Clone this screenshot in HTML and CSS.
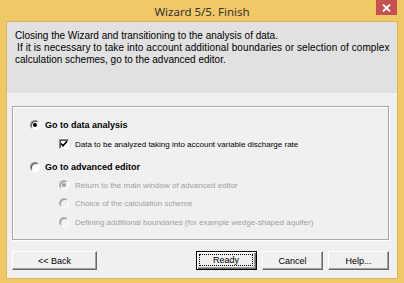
FILE: index.html
```html
<!DOCTYPE html>
<html>
<head>
<meta charset="utf-8">
<link rel="stylesheet" href="styles.css">
</head>
<body>
<div class="window">
  <div class="titlebar">
    <span class="tb-side"></span>
    <div class="title">Wizard 5/5. Finish</div>
    <div class="tb-side tb-right">
      <div class="close">
        <svg width="9" height="8" viewBox="0 0 9 8"><path d="M1 0.5 L8 7.5 M8 0.5 L1 7.5" stroke="#fff" stroke-width="1.8" fill="none"/></svg>
      </div>
    </div>
  </div>
  <div class="client">
    <div class="header">
      <p>Closing the Wizard and transitioning to the analysis of data.</p>
      <p class="indent">If it is necessary to take into account additional boundaries or selection of complex</p>
      <p>calculation schemes, go to the advanced editor.</p>
    </div>
    <div class="group">
      <div class="row row-main r1"><span class="radio checked"></span><span class="label bold">Go to data analysis</span></div>
      <div class="row row-sub r2"><span class="check"><svg width="8" height="8" viewBox="0 0 8 8"><path d="M1 3.5 L3 5.8 L7 1.2" stroke="#000" stroke-width="1.6" fill="none"/></svg></span><span class="label">Data to be analyzed taking into account variable discharge rate</span></div>
      <div class="row row-main r3"><span class="radio"></span><span class="label bold">Go to advanced editor</span></div>
      <div class="row row-sub r4 disabled"><span class="radio checked"></span><span class="label">Return to the main window of advanced editor</span></div>
      <div class="row row-sub r5 disabled"><span class="radio"></span><span class="label">Choice of the calculation scheme</span></div>
      <div class="row row-sub r6 disabled"><span class="radio"></span><span class="label">Defining additional boundaries (for example wedge-shaped aquifer)</span></div>
    </div>
    <div class="buttons">
      <button class="btn back">&lt;&lt; Back</button>
      <span class="spacer"></span>
      <button class="btn default"><span class="focus">Ready</span></button>
      <button class="btn">Cancel</button>
      <button class="btn">Help...</button>
    </div>
  </div>
</div>
</body>
</html>
```

FILE: styles.css
```css
* { box-sizing: border-box; }
html, body { margin: 0; padding: 0; }
body {
  width: 404px;
  height: 283px;
  overflow: hidden;
  font-family: "Liberation Sans", Arial, sans-serif;
}
.window {
  width: 404px;
  height: 283px;
  background: #f0c865;
  padding: 0 7px 5px 7px;
  display: flex;
  flex-direction: column;
}
.titlebar {
  height: 22px;
  flex: none;
  display: grid;
  grid-template-columns: 1fr auto 1fr;
  margin: 0 -7px 0 -7px;
}
.title {
  font-family: "Noto Sans", "Open Sans", sans-serif;
  font-size: 11.5px;
  color: #333;
  line-height: 22px;
  padding-top: 1px;
}
.tb-right {
  display: flex;
  justify-content: flex-end;
  align-items: flex-start;
  padding-right: 7px;
}
.close {
  width: 21px;
  height: 15px;
  background: #c75050;
  display: flex;
  align-items: center;
  justify-content: center;
}
.client {
  flex: 1;
  background: #f0f0f0;
  display: flex;
  flex-direction: column;
  outline: 1px solid #d9b45c;
}
.header {
  height: 71px;
  flex: none;
  background: #e1e1e1;
  padding: 8px 0 0 8px;
  font-size: 10px;
  color: #000;
}
.header p {
  margin: 0;
  line-height: 12px;
  white-space: nowrap;
}
.header p.indent { padding-left: 2px; letter-spacing: 0.1px; }
.group {
  margin: 13px 8px 0 5px;
  height: 134px;
  flex: none;
  border: 1px solid #a8a8a8;
  box-shadow: inset 1px 1px 0 #fff, 1px 1px 0 #fff;
  padding: 11px 0 0 0;
  display: flex;
  flex-direction: column;
  font-size: 8px;
}
.row {
  height: 14px;
  display: flex;
  align-items: center;
  white-space: nowrap;
}
.row-main { padding-left: 17px; }
.row-sub { padding-left: 46px; }
.r2 { margin-top: 5px; }
.r3 { margin-top: 9px; }
.r4 { margin-top: 4px; }
.r5 { margin-top: 4px; }
.r6 { margin-top: 5px; }
.label { margin-left: 5px; color: #000; }
.row-sub .label { margin-left: 6px; }
.bold { font-weight: bold; font-size: 9px; }
.radio {
  width: 10px;
  height: 10px;
  border-radius: 50%;
  background: #fff;
  border: 1px solid;
  border-color: #8a8a8a #ffffff #ffffff #8a8a8a;
  box-shadow: inset 1px 1px 0 #555;
  display: flex;
  align-items: center;
  justify-content: center;
  flex: none;
}
.radio.checked::after {
  content: "";
  width: 4px;
  height: 4px;
  border-radius: 50%;
  background: #000;
}
.disabled .radio {
  background: #f0f0f0;
  border-color: #b4b4b4 #ffffff #ffffff #b4b4b4;
  box-shadow: inset 1px 1px 0 #9a9a9a;
}
.disabled .radio.checked::after { background: #a0a0a0; }
.disabled .label { color: #a0a0a0; }
.check {
  width: 10px;
  height: 10px;
  background: #fff;
  border: 1px solid;
  border-color: #8a8a8a #ffffff #ffffff #8a8a8a;
  box-shadow: inset 1px 1px 0 #555;
  display: flex;
  align-items: center;
  justify-content: center;
  flex: none;
  overflow: hidden;
}
.check svg { flex: none; display: block; }
.buttons {
  display: flex;
  margin: 11px 8px 0 5px;
  gap: 5px;
}
.spacer { flex: 1; }
.btn {
  height: 19px;
  width: 61px;
  padding: 0;
  margin: 0;
  font-family: "Liberation Sans", Arial, sans-serif;
  font-size: 9px;
  color: #000;
  background: #f0f0f0;
  border: 1px solid;
  border-color: #ffffff #696969 #696969 #ffffff;
  box-shadow: inset -1px -1px 0 #a0a0a0;
  display: flex;
  align-items: center;
  justify-content: center;
}
.btn.back { width: 85px; }
.btn.default {
  border-color: #000;
  box-shadow: inset 1px 1px 0 #fff, inset -1px -1px 0 #696969, inset -2px -2px 0 #a0a0a0;
  padding: 2px 3px 3px 2px;
}
.focus {
  flex: 1;
  align-self: stretch;
  border: 1px dotted #000;
  display: flex;
  align-items: center;
  justify-content: center;
}
```
